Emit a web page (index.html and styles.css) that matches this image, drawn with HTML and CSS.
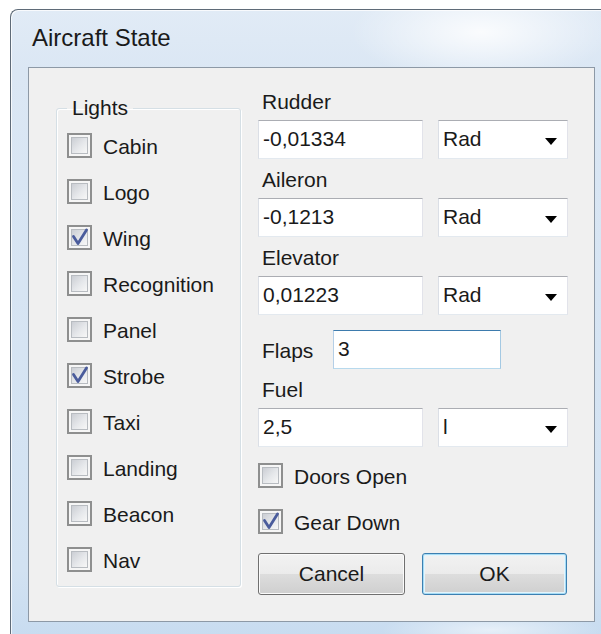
FILE: index.html
```html
<!DOCTYPE html>
<html lang="en">
<head>
<meta charset="utf-8">
<title>Aircraft State</title>
<link rel="stylesheet" href="styles.css">
</head>
<body>
<div class="window">
  <div class="titlebar">Aircraft State</div>
  <div class="client">
    <fieldset class="group">
      <legend>Lights</legend>
      <div class="checks">
        <label class="check"><span class="box"></span><span class="txt">Cabin</span></label>
        <label class="check"><span class="box"></span><span class="txt">Logo</span></label>
        <label class="check"><span class="box checked"><svg viewBox="0 0 25 25"><path d="M6.5 11.5 L11 18.5 L19.5 5"/></svg></span><span class="txt">Wing</span></label>
        <label class="check"><span class="box"></span><span class="txt">Recognition</span></label>
        <label class="check"><span class="box"></span><span class="txt">Panel</span></label>
        <label class="check"><span class="box checked"><svg viewBox="0 0 25 25"><path d="M6.5 11.5 L11 18.5 L19.5 5"/></svg></span><span class="txt">Strobe</span></label>
        <label class="check"><span class="box"></span><span class="txt">Taxi</span></label>
        <label class="check"><span class="box"></span><span class="txt">Landing</span></label>
        <label class="check"><span class="box"></span><span class="txt">Beacon</span></label>
        <label class="check"><span class="box"></span><span class="txt">Nav</span></label>
      </div>
    </fieldset>

    <div class="controls">
      <div class="lbl">Rudder</div>
      <div class="pair">
        <div class="tb">-0,01334</div>
        <div class="combo"><span>Rad</span><svg class="arrow" viewBox="0 0 12 7"><polygon points="0,0 12,0 6,7"/></svg></div>
      </div>

      <div class="lbl">Aileron</div>
      <div class="pair">
        <div class="tb">-0,1213</div>
        <div class="combo"><span>Rad</span><svg class="arrow" viewBox="0 0 12 7"><polygon points="0,0 12,0 6,7"/></svg></div>
      </div>

      <div class="lbl">Elevator</div>
      <div class="pair">
        <div class="tb">0,01223</div>
        <div class="combo"><span>Rad</span><svg class="arrow" viewBox="0 0 12 7"><polygon points="0,0 12,0 6,7"/></svg></div>
      </div>

      <div class="flaps">
        <span class="flaps-lbl">Flaps</span>
        <div class="tb tb-hot">3</div>
      </div>

      <div class="lbl">Fuel</div>
      <div class="pair pair-last">
        <div class="tb">2,5</div>
        <div class="combo"><span>l</span><svg class="arrow" viewBox="0 0 12 7"><polygon points="0,0 12,0 6,7"/></svg></div>
      </div>

      <div class="checks side-checks">
        <label class="check"><span class="box"></span><span class="txt">Doors Open</span></label>
        <label class="check"><span class="box checked"><svg viewBox="0 0 25 25"><path d="M6.5 11.5 L11 18.5 L19.5 5"/></svg></span><span class="txt">Gear Down</span></label>
      </div>

      <div class="buttons">
        <button class="btn btn-cancel" type="button">Cancel</button>
        <button class="btn btn-ok" type="button">OK</button>
      </div>
    </div>
  </div>
</div>
</body>
</html>
```
FILE: styles.css
```css
* {
  box-sizing: border-box;
}

html,
body {
  margin: 0;
  background: #ffffff;
  overflow: hidden;
}

body {
  height: 634px;
  font-family: "Liberation Sans", Arial, sans-serif;
  font-size: 21px;
  color: #1a1a1a;
}

/* Aero-style window frame */
.window {
  margin: 9px 0 0 10px;
  width: 620px;
  padding: 0 0 30px 17px;
  border-top: 1px solid #5f6b78;
  border-left: 1px solid #5f6b78;
  border-top-left-radius: 8px;
  box-shadow: inset 1px 1px 0 rgba(255, 255, 255, 0.75);
  background:
    radial-gradient(ellipse 130px 50px at 470px 22px, rgba(255, 255, 255, 0.85), rgba(255, 255, 255, 0)),
    radial-gradient(ellipse 110px 18px at 480px 620px, rgba(255, 255, 255, 0.55), rgba(255, 255, 255, 0)),
    linear-gradient(180deg, #e1ebf6 0px, #dbe7f4 60px, #d2e2f2 560px, #c8dcf0 625px);
}

.titlebar {
  height: 57px;
  padding: 13px 0 0 4px;
  font-size: 24px;
  line-height: 30px;
  color: #1a1a1a;
}

/* dialog client area */
.client {
  width: 567px;
  height: 555px;
  display: flex;
  align-items: flex-start;
  padding: 22px 0 0 27px;
  border: 1px solid #8d99a6;
  background: #f0f0f0;
}

/* Lights group box */
.group {
  margin: 6px 0 0 0;
  width: 185px;
  min-width: 0;
  padding: 13px 0 14px 10px;
  border: 1px solid #d5dfe5;
  border-radius: 3px;
  box-shadow: inset 1px 1px 0 #ffffff, 1px 1px 0 #ffffff;
}

.group legend {
  padding: 0 5px;
  line-height: 24px;
}

.checks {
  display: flex;
  flex-direction: column;
  gap: 21px;
}

.check {
  display: flex;
  align-items: center;
  gap: 11px;
  height: 25px;
  line-height: 24px;
  white-space: nowrap;
}

.txt {
  padding-top: 3px;
}

.box {
  position: relative;
  flex: none;
  width: 25px;
  height: 25px;
  border: 2px solid #8e8f8f;
  background: #f6f6f6;
}

.box::before {
  content: "";
  position: absolute;
  inset: 2px;
  border: 1px solid #b8bcc1;
  background: linear-gradient(135deg, #cbced4 0%, #e6e8eb 55%, #f7f7f7 100%);
}

.box svg {
  position: absolute;
  left: -2px;
  top: -2px;
  width: 25px;
  height: 25px;
}

.box svg path {
  fill: none;
  stroke: #4a5c9c;
  stroke-width: 2.8;
  stroke-linecap: round;
  stroke-linejoin: round;
}

/* right-hand column of inputs */
.controls {
  margin-left: 17px;
  width: 310px;
}

.lbl {
  padding-left: 4px;
  line-height: 24px;
  margin-bottom: 6px;
}

.pair {
  display: flex;
  gap: 15px;
  margin-bottom: 9px;
}

.pair-last {
  margin-bottom: 16px;
}

.tb,
.combo {
  height: 39px;
  border: 1px solid;
  border-color: #abadb3 #e2e3ea #e3e9ef #dbdfe6;
  background: #ffffff;
  padding-left: 4px;
  line-height: 35px;
  white-space: nowrap;
}

.tb {
  width: 165px;
}

.combo {
  width: 130px;
  display: flex;
  justify-content: space-between;
  align-items: flex-start;
  padding-right: 10px;
}

.arrow {
  width: 12px;
  height: 7px;
  margin-top: 17px;
  fill: #000000;
}

.flaps {
  display: flex;
  align-items: center;
  margin: 15px 0 9px 0;
}

.flaps-lbl {
  width: 75px;
  padding: 3px 0 0 4px;
  line-height: 24px;
}

.flaps .tb {
  width: 168px;
}

.tb-hot {
  border-color: #3d7bad #a4c9e3 #b7d9ed #b5cfe7;
}

.side-checks {
  margin-bottom: 19px;
}

.buttons {
  display: flex;
  gap: 17px;
}

.btn {
  height: 42px;
  margin: 0;
  padding: 0;
  border: 1px solid #707070;
  border-radius: 3px;
  background: linear-gradient(180deg, #f2f2f2 0%, #ebebeb 50%, #dddddd 50%, #cfcfcf 100%);
  box-shadow: inset 0 0 0 1px #fbfbfb;
  font: inherit;
  color: #1a1a1a;
  line-height: 40px;
  text-align: center;
}

.btn-cancel {
  width: 147px;
}

.btn-ok {
  width: 145px;
  border-color: #3c7fb1;
  box-shadow: inset 0 0 0 1px #a6dcf5, inset 0 0 0 2px #e4f4fc;
}
```
